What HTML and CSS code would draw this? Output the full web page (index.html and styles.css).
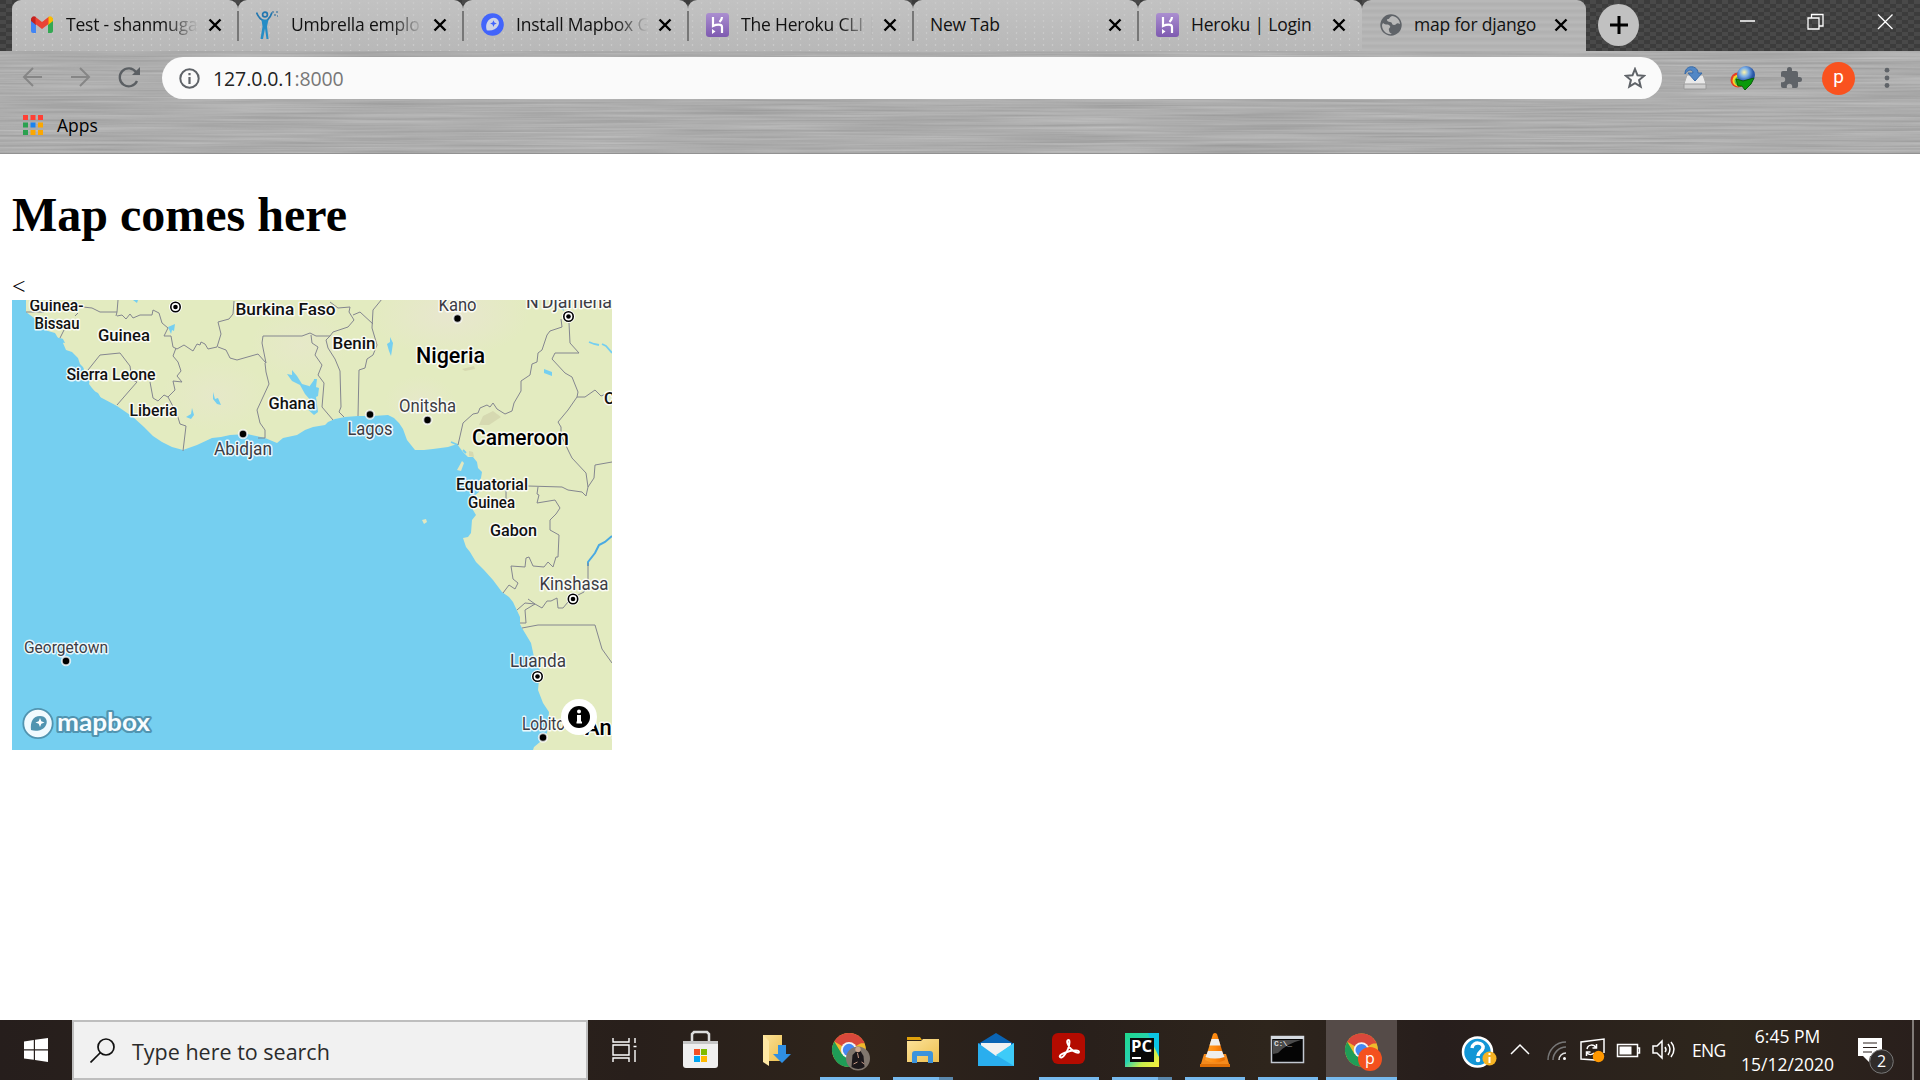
FILE: index.html
```html
<!DOCTYPE html>
<html lang="en">
<head>
<meta charset="utf-8">
<title>map for django</title>
<link rel="stylesheet" href="styles.css">
</head>
<body>
<svg class="defs" width="0" height="0">
  <defs>
    <linearGradient id="heroku" x2="0" y2="1"><stop stop-color="#ab8fd0"/><stop offset="1" stop-color="#7e5ab0"/></linearGradient>
    <linearGradient id="folder" x2="1" y2="1"><stop stop-color="#fce29a"/><stop offset="1" stop-color="#edc04f"/></linearGradient>
    <linearGradient id="cone" x2="1"><stop stop-color="#ffa12b"/><stop offset=".5" stop-color="#ff8a10"/><stop offset="1" stop-color="#e56a00"/></linearGradient>
    <linearGradient id="pycharm" x2="1" y2="1"><stop stop-color="#1fd98c"/><stop offset=".45" stop-color="#27d2b1"/><stop offset=".7" stop-color="#c8ee4b"/><stop offset="1" stop-color="#fcf03c"/></linearGradient>
    <radialGradient id="globe" cx=".4" cy=".35"><stop stop-color="#fff5a8"/><stop offset=".5" stop-color="#79aee8"/><stop offset="1" stop-color="#2a56a6"/></radialGradient>
    <symbol id="close" viewBox="0 0 14 14"><path d="M1.500 1.500l11 11M12.500 1.500l-11 11" fill="none" stroke="#000" stroke-width="2.400"/></symbol>
    <symbol id="heroku-icon" viewBox="0 0 23 24"><rect width="23" height="24" rx="3" fill="url(#heroku)"/><path d="M7 4v9c3-1.500 9-2.500 9 1v6M16 4c0 2-1 3.500-2.500 5" fill="none" stroke="#fff" stroke-width="2.200"/><path d="M6 16l3.500 2.500L6 21z" fill="#fff"/></symbol>
    <symbol id="chrome" viewBox="-17 -17 34 34"><circle r="16.500" fill="#efb92c"/><path d="M0 0L-14.300-8.200A16.500 16.500 0 0 1 14.300-8.200z" fill="#d9483b"/><path d="M-14.300-8.200A16.500 16.500 0 0 0 1 16.500L7 4-7 4z" fill="#1f9d57"/><path d="M0-7.500H14.700" stroke="#d9483b" stroke-width="2"/><circle r="7.800" fill="#f4f4f4"/><circle r="6" fill="#4587f1"/></symbol>
  </defs>
</svg>
<header class="browser">
  <svg class="brush" width="1920" height="154"><filter id="metal" x="0" y="0" width="100%" height="100%" color-interpolation-filters="sRGB"><feTurbulence type="fractalNoise" baseFrequency=".006 .4" numOctaves="3" seed="4"/><feColorMatrix values=".17 0 0 0 .593 .17 0 0 0 .593 .17 0 0 0 .593 0 0 0 0 1"/></filter><rect width="1920" height="154" filter="url(#metal)"/></svg>
  <div class="tabstrip">
    <div class="tabs">
      <div class="tab"><svg width="22" height="17" viewBox="0 0 22 17"><path d="M0 2v13q0 2 2 2h3V6z" fill="#4285f4"/><path d="M22 2v13q0 2-2 2h-3V6z" fill="#34a853"/><path d="M0 2.500Q2-1 5 1v8L0 5z" fill="#c5221f"/><path d="M22 2.500Q20-1 17 1v8l5-4z" fill="#fbbc04"/><path d="M4.500 1L11 6l6.500-5v7L11 13 4.500 8z" fill="#ea4335"/></svg><span class="title">Test - shanmuga</span><svg class="x"><use href="#close"/></svg></div>
      <div class="tab"><svg width="23" height="28" viewBox="0 0 23 28"><g fill="none" stroke="#2277b0" stroke-width="1.700"><path d="M.5 1.500c2 5 4 7 7 8M16 1.500c-1 4-3 6-5 8"/><circle cx="9" cy="3.500" r="2.400"/></g><path d="M5.500 8.500h7l-1.500 7 1.500 12.500h-2L9 17.500 7 28H4.500l2-12.500z" fill="#258dc6"/><path d="M16 1h2M20 1h2M18 4h2M21 5h1" stroke="#5584a6" stroke-width="1.500"/></svg><span class="title">Umbrella emplo</span><svg class="x"><use href="#close"/></svg></div>
      <div class="tab"><svg width="23" height="23" viewBox="0 0 24 24"><circle cx="12" cy="12" r="11.800" fill="#4264fb"/><path d="M6 18c-2-6 1-12 7-13 5 0 7 5 5 8-2 4-7 6-12 5z" fill="#cfd4e6"/><path d="M13 7.500l1 2.500 2.500 1-2.500 1-1 2.500-1-2.500L9.500 11l2.500-1z" fill="#4264fb"/></svg><span class="title">Install Mapbox G</span><svg class="x"><use href="#close"/></svg></div>
      <div class="tab"><svg width="23" height="24"><use href="#heroku-icon"/></svg><span class="title">The Heroku CLI |</span><svg class="x"><use href="#close"/></svg></div>
      <div class="tab plain"><span class="title full">New Tab</span><svg class="x"><use href="#close"/></svg></div>
      <div class="tab last"><svg width="23" height="24"><use href="#heroku-icon"/></svg><span class="title full">Heroku | Login</span><svg class="x"><use href="#close"/></svg></div>
      <div class="tab active"><svg width="22" height="22" viewBox="0 0 22 22"><circle cx="11" cy="11" r="10.700" fill="#5f6368"/><path d="M3 9c3 3 5 0 7 3 1 2-2 2-1 4 0 2 1 3 3 4-5 1-10-3-10-9zM12 2c-3 1-2 3-4 3s-1 3 2 3 1 3 4 3 2-3 6-1c0-4-4-8-8-8z" fill="#b9b9b9"/></svg><span class="title full">map for django</span><svg class="x"><use href="#close"/></svg></div>
    </div>
    <div class="strip-end">
      <div class="newtab"><svg width="18" height="18" viewBox="0 0 18 18"><path d="M9 0v18M0 9h18" stroke="#000" stroke-width="3"/></svg></div>
      <svg class="winbtns" width="154" height="18" viewBox="0 0 154 18" fill="none" stroke="#fff" stroke-width="1.300"><path d="M0 8h15M68 5h11v11H68zM71.500 5V1.500H83V13h-4M138 1.500l14.500 14.500M152.500 1.500L138 16"/></svg>
    </div>
  </div>
  <div class="toolbar">
    <svg class="nav" width="120" height="24" viewBox="0 0 120 24" fill="none" stroke-width="2"><path d="M20 11H2M11 2l-9 9 9 9M49 11h18M58 2l9 9-9 9" stroke="#868686"/><path d="M114 6a9 9 0 1 0 1 9" stroke="#5b5f63" stroke-width="2.300"/><path d="M118 1v8h-8z" fill="#5b5f63"/></svg>
    <div class="omnibox">
      <svg width="21" height="21" viewBox="0 0 21 21"><circle cx="10.500" cy="10.500" r="9.200" fill="none" stroke="#5f6368" stroke-width="2"/><path d="M10.500 9v7M10.500 5v2.200" stroke="#5f6368" stroke-width="2.200"/></svg>
      <span class="url">127.0.0.1<i>:8000</i></span>
      <svg width="22" height="22" viewBox="0 0 22 22"><path d="M11 2l2.500 6.300 6.700.5-5.100 4.300 1.600 6.600L11 16.100l-5.700 3.600 1.600-6.600L1.800 8.800l6.700-.5z" fill="none" stroke="#5f6368" stroke-width="2"/></svg>
    </div>
    <div class="actions">
      <svg width="24" height="24" viewBox="0 0 24 24"><path d="M4 9h16l3 9v5H1v-5z" fill="#e9e9e9" stroke="#aaa"/><path d="M1 18h22v5H1z" fill="#cfcfcf" stroke="#999"/><path d="M2 8C2-2 15-1 15 7h4l-7 8-7-8h5c0-4-5-4-8 1z" fill="#5187c6" stroke="#376aa8"/></svg>
      <svg width="26" height="26" viewBox="0 0 26 26"><circle cx="8" cy="15" r="7.500" fill="#e43e24"/><circle cx="8.500" cy="15.500" r="6" fill="#f5d327"/><circle cx="9" cy="16" r="4.500" fill="#53c34a"/><circle cx="16" cy="10" r="9" fill="url(#globe)"/><path d="M6 14l7 2 11-3-3 6-6 6-3-4-4 0z" fill="#0a9a0a" stroke="#0a5f0a"/></svg>
      <svg width="24" height="24" viewBox="0 0 24 24"><path d="M20.500 11H19V7a2 2 0 0 0-2-2h-4V3.500a2.500 2.500 0 0 0-5 0V5H4a2 2 0 0 0-2 2v3.800h1.500a2.700 2.700 0 0 1 0 5.400H2V20a2 2 0 0 0 2 2h3.800v-1.500a2.700 2.700 0 0 1 5.400 0V22H17a2 2 0 0 0 2-2v-4h1.500a2.500 2.500 0 0 0 0-5z" fill="#5f6368"/></svg>
      <span class="avatar">p</span>
      <svg class="menu" width="6" height="22" viewBox="0 0 6 22" fill="#5f6368"><circle cx="3" cy="3.200" r="2.400"/><circle cx="3" cy="11" r="2.400"/><circle cx="3" cy="18.500" r="2.400"/></svg>
    </div>
  </div>
  <div class="bookmarks">
    <svg width="20" height="20" viewBox="0 0 20 20"><path d="M0 0h5v5H0zM7.500 0h5v5h-5zM15 0h5v5h-5z" fill="#ff3f35"/><path d="M0 7.500h5v5H0zM0 15h5v5H0z" fill="#2ba14f"/><path d="M7.500 7.500h5v5h-5z" fill="#1a83f0"/><path d="M15 7.500h5v5h-5zM7.500 15h5v5h-5zM15 15h5v5h-5z" fill="#fba700"/></svg>
    <span>Apps</span>
  </div>
</header>
<main class="page">
  <h1>Map comes here</h1>
  &lt;
  <svg class="map" width="600" height="450" viewBox="12 300 600 450">
    <defs>
      <radialGradient id="dry"><stop stop-color="#ebe3d8" stop-opacity=".6"/><stop offset="1" stop-color="#ebe3d8" stop-opacity="0"/></radialGradient>
      <clipPath id="view"><rect x="12" y="300" width="600" height="450"/></clipPath>
    </defs>
    <rect x="12" y="300" width="600" height="450" fill="#75cff0"/>
    <path fill="#e3ebc0" d="M26 300V312L34 318 43 327 48 331 55 333 58 338 63 339V343L66 350 72 352 78 358 80 364 83 367 86 374 90 378 89 384 92 388 100 397 117 406 133 417 144 427 153 436 162 442 172 447 183 450 197 445 212 438 221 437 230 435 247 434 265 438 277 443 283 438 297 435 305 430 313 427 325 425 328 422 335 419 345 417 358 416 373 416 388 415 394 418 399 423 403 429 407 440 415 450 424 450 433 449 448 447 457 444 463 452 468 457 473 457 477 462 478 468 482 472 481 478 478 484 479 492 474 496 473 510 476 515 472 520 471 533 468 537 463 538 466 547 470 552 476 562 484 570 493 580 502 592 509 597 513 602 520 617 520 624 522 628 531 643 534 657 540 670 538 690 543 703 549 712 547 733 540 742 534 747 533 750H612V300z"/>
    <g clip-path="url(#view)" fill="url(#dry)"><ellipse cx="450" cy="315" rx="80" ry="42"/><ellipse cx="215" cy="395" rx="55" ry="36" opacity=".6"/><ellipse cx="300" cy="345" rx="50" ry="35" opacity=".6"/><ellipse cx="420" cy="400" rx="35" ry="25" opacity=".6"/></g>
    <path d="M483 416l10-5 8 6-12 8-10 0zM462 369l12-3 1 3-10 2zM469 451l4 1 1 5-5-1z" fill="#c9c8a2" opacity=".5"/>
    <path d="M457 470l5-9 2 2-3 8zM422 520l4-1 1 3-3 2z" fill="#e3e8bf"/>
    <g fill="#75cff0"><path d="M287 374l5 1v-5l5 6 5 8 7 2 4 7 1-14 3 0-1 8 3 1-1 8-2 1 2 15-4 3-9-8-1-6 8 1-7-8-5-9-8-4zM213 392l2 7 3-1 3 7-4-1-4-5zM192 408l2 7-3 4-5-2 5-3zM168 327l7-3-1 7-2-1-1 4zM390 337l3 6-1 7-1 6-2-5-2-7 3-2zM544 369l8 3 0 4-8-3zM133 300h5l-1 3zM53 319l4 1-1 4zM309 387l5-7 2 2v10l-7 5zM560 301h4v10l-3-2zM88 388l10 5 3 5-8-2zM55 337l8 2 2 4-7-1z"/></g>
    <path d="M589 342l5 2 5 1M602 344l4 2 6 7M466 453l-3-3M451 442l7 3" fill="none" stroke="#75cff0" stroke-width="1.800"/>
    <path d="M588 566v-4l7-9 4-8 6-3 7-6" fill="none" stroke="#49a9e2" stroke-width="2"/>
    <path fill="none" stroke="#84868f" stroke-width="1" d="M26 312H44M83 307l9 1 8 4h17l1-12M60 338l4-8M75 316l3-3M116 316l1-4M117 316l5-1 4 4 4-5 3 4 7-3 12 0 1-5 6 3 3 10 6 5-4 8 7 0 2 11 4 2 7-4 9 6 4-7 3 1 1-3 4 2 3 5 9-2 4-13-3-12 11-3 4-5 1-13M218 347l8 3 4 8 7 2 21-6 8 9-4-20 1-7h39l8-3 6 3 14 0 3-4 15-5 6-7-5-8 1-5-12 1-8-6M265 363l1 9 3 12-12 26 3 13 5 7v8h-7M311 335l1 8 6 4-3 8 7 10-4 10 6 8-2 24 11 13M330 336l-4 4 2 8 7 11 5 12 1 36-2 5 5 5M358 416l1-46 6-2 2-9 6-4 4-10-5-17 1-18 9-11M353 315l7-3 13 12M458 445l5-22 10-9 5-1 2-5 7-3 3 2 3-4 4 6 8 5 7-3 2-8 7-12 0-10 9-6 2-11 5-2 1-9 4-3 5-15 3-4 12-4-1-8M569 323l1 20 9 10h-24l-3 6 13 14 7 4 6 15-1 5 8 0 10-7 6 6 5-2M577 397l-9 13-10 12 3 5 0 8 8 17 3 6 14 15 2 14 6-9 1-13 17-3M528 486l34 1 6 3 14 2 4 4 2-9M538 487l-1 7 2 1-2 8 18-3 5 8-4 6-6 6v10l9 5-1 22-2 0-3 10-5-5-4 5-11-1-4-9-3 1-1 9-14-1 2 13 5 4-3 6-6-4-6 8M506 490v9M517 610l8-7 10 1 7 4 5-7h4l6-3 1 10h5l5-6M576 596l8-4 4-11v-18M535 604l-10 6 1 13h-6M528 599l7 5M522 628l16-3h57l7 24 10 14M88 370l12-15 20-2 10 13 2 14 5 2-7 8-13 15M150 382l3 16 5 3 6-6 4 2 9 17 3 10 6 2-3 25M168 397l7-7-2-9 9 1-5-6 4-5-3-9-5-6 3-8"/>
    <g class="country" clip-path="url(#view)">
      <text x="29.500" y="310.500" textLength="54" lengthAdjust="spacingAndGlyphs">Guinea-</text><text x="34.500" y="328.500" textLength="45" lengthAdjust="spacingAndGlyphs">Bissau</text><text x="98" y="341" textLength="52" lengthAdjust="spacingAndGlyphs">Guinea</text><text x="66.500" y="379.500" textLength="89" lengthAdjust="spacingAndGlyphs">Sierra Leone</text><text x="129.500" y="416" textLength="48" lengthAdjust="spacingAndGlyphs">Liberia</text><text x="235.500" y="315" textLength="100" lengthAdjust="spacingAndGlyphs">Burkina Faso</text><text x="268.500" y="408.500" textLength="47" lengthAdjust="spacingAndGlyphs">Ghana</text><text x="332.500" y="349" textLength="43" lengthAdjust="spacingAndGlyphs">Benin</text><text x="456" y="489.500" textLength="72" lengthAdjust="spacingAndGlyphs">Equatorial</text><text x="468" y="507.500" textLength="47" lengthAdjust="spacingAndGlyphs">Guinea</text><text x="490" y="536" textLength="47" lengthAdjust="spacingAndGlyphs">Gabon</text><text x="604" y="404">C</text>
      <g class="large"><text x="416" y="362.500" textLength="69" lengthAdjust="spacingAndGlyphs">Nigeria</text><text x="472" y="444.500" textLength="97" lengthAdjust="spacingAndGlyphs">Cameroon</text><text x="585" y="735">Ang</text></g>
    </g>
    <g class="city" clip-path="url(#view)">
      <text x="214" y="454.500" textLength="58" lengthAdjust="spacingAndGlyphs">Abidjan</text><text x="438.500" y="310.500" textLength="38" lengthAdjust="spacingAndGlyphs">Kano</text><text x="526" y="307.500" textLength="86" lengthAdjust="spacingAndGlyphs">N'Djamena</text><text x="399" y="411.500" textLength="57" lengthAdjust="spacingAndGlyphs">Onitsha</text><text x="347.500" y="434.500" textLength="45" lengthAdjust="spacingAndGlyphs">Lagos</text><text x="539.500" y="589.500" textLength="69" lengthAdjust="spacingAndGlyphs">Kinshasa</text><text x="510" y="667" textLength="56" lengthAdjust="spacingAndGlyphs">Luanda</text><text x="522" y="730" textLength="43" lengthAdjust="spacingAndGlyphs">Lobito</text><text class="small" x="24" y="653" textLength="84" lengthAdjust="spacingAndGlyphs">Georgetown</text>
    </g>
    <g stroke="#fff" stroke-opacity=".75" stroke-width="2"><circle cx="243" cy="434" r="4.200"/><circle cx="457.500" cy="318.500" r="4.200"/><circle cx="370" cy="414.500" r="4.200"/><circle cx="427.500" cy="420" r="4.200"/><circle cx="543" cy="737.500" r="4.200"/><circle cx="66" cy="661" r="4.200"/></g>
    <g fill="#fff"><circle cx="175.500" cy="307" r="6.500"/><circle cx="568.500" cy="316.500" r="6.500"/><circle cx="573" cy="599" r="6.500"/><circle cx="537.500" cy="676.500" r="6.500"/></g>
    <g fill="none" stroke="#000" stroke-width="1.600"><circle cx="175.500" cy="307" r="4.700"/><circle cx="568.500" cy="316.500" r="4.700"/><circle cx="573" cy="599" r="4.700"/><circle cx="537.500" cy="676.500" r="4.700"/></g>
    <circle cx="175.500" cy="307" r="2.300"/><circle cx="568.500" cy="316.500" r="2.300"/><circle cx="573" cy="599" r="2.300"/><circle cx="537.500" cy="676.500" r="2.300"/>
    <circle cx="579" cy="717" r="18" fill="#fff"/><circle cx="579" cy="717" r="11"/><circle cx="579" cy="711.500" r="2" fill="#fff"/><path d="M577 715h4v6.500h1v2h-5.500v-2h.5z" fill="#fff"/>
    <circle cx="38" cy="723.500" r="14.700" fill="#f1fafe" stroke="#5194b0" stroke-width="1.800"/><path d="M31 730c-1-8 2-14 9-14 6 0 8 5 6 9-2 5-9 7-15 5z" fill="#5194b0"/><path d="M40 718l1.300 3.200 3.200 1.300-3.200 1.300L40 727l-1.300-3.200-3.200-1.300 3.200-1.300z" fill="#fff"/>
    <text class="brand" x="57" y="731" textLength="93" lengthAdjust="spacingAndGlyphs">mapbox</text>
  </svg>
</main>
<footer class="taskbar">
  <div class="start"><svg width="24" height="24" viewBox="0 0 24 24" fill="#fff"><path d="M0 3.400l9.800-1.400v9.300H0zM11 1.800L24 0v11.300H11zM0 12.500h9.800v9.300L0 20.500zM11 12.500h13V24l-13-1.900z"/></svg></div>
  <div class="search"><svg width="25" height="25" viewBox="0 0 25 25" fill="none" stroke="#111" stroke-width="1.700"><circle cx="16" cy="9" r="8"/><path d="M10.500 14.500L.5 24.500"/></svg><span>Type here to search</span></div>
  <div class="taskview"><svg width="25" height="24" viewBox="0 0 25 24" fill="none" stroke="#fff" stroke-width="1.400"><path d="M1 0v4h16V0M1 24v-4h16v4M1 7h16v10H1zM23 0v5M23 12v12M21.500 8.500h3"/></svg></div>
  <div class="apps">
    <div class="app"><svg viewBox="664 1020 73 60"><path d="M692 1043v-9l2-2h13l2 2v9" fill="none" stroke="#ddd" stroke-width="2.500"/><path d="M683 1041h35v24q0 3-3 3h-29q-3 0-3-3z" fill="#efefef"/><path d="M683 1041h35v3h-35z" fill="#c5c5c5"/><path d="M694 1049h6v6h-6z" fill="#f25022"/><path d="M701 1049h6v6h-6z" fill="#7fba00"/><path d="M694 1056h6v6h-6z" fill="#00a4ef"/><path d="M701 1056h6v6h-6z" fill="#ffb900"/></svg></div>
    <div class="app"><svg viewBox="737 1020 73 60"><path d="M763 1035h19v26h-19z" fill="url(#folder)"/><path d="M763 1035l6 6v25l-6-4z" fill="#ffe8a4"/><path d="M778 1045h8v9h5l-9 9-9-9h5z" fill="#2f8fe3"/></svg></div>
    <div class="app run"><svg viewBox="810.500 1020 73 60"><use href="#chrome" x="832" y="1032.500" width="35" height="35"/><circle cx="858.500" cy="1058.500" r="12" fill="#81776e"/><path d="M852 1067l1-12 4-4h4l3 5 1 11q-6 4-13 0z" fill="#1c181b"/><circle cx="858.500" cy="1049.500" r="2.700" fill="#c9a690"/><path d="M858 1053l1 5M854 1064l4-2M862 1062l3 2" stroke="#c79a86" fill="none"/></svg></div>
    <div class="app run multi"><svg viewBox="883 1020 73 60"><path d="M907 1037h13l2 3h-15z" fill="#e0a10c"/><path d="M907 1041h14l2-2h16v23h-32z" fill="url(#folder)"/><path d="M912 1063v-9q0-3 3-3h15q3 0 3 3v9h-5v-7h-11v7z" fill="#3b93dc"/></svg></div>
    <div class="app"><svg viewBox="956 1020 73 60"><path d="M978 1044l18-11 18 11v8h-36z" fill="#0a64b4"/><path d="M981 1043h30v16h-30z" fill="#f1f1f1"/><path d="M978 1043l18 13 18-13v23h-36z" fill="#2aaeee"/><path d="M1014 1043v23l-18-11z" fill="#3ecbf8"/></svg></div>
    <div class="app run"><svg viewBox="1029 1020 73 60"><rect x="1052" y="1033" width="33" height="31" rx="6" fill="#b30b00"/><path d="M1060 1057c-2-2 6-5 10-6s9-1 9 1-5 0-8-3-5-8-3-9 2 4 0 9-6 10-8 8z" fill="none" stroke="#fff" stroke-width="1.900"/></svg></div>
    <div class="app run multi"><svg viewBox="1102 1020 73 60"><path d="M1125 1033h34v34h-34z" fill="url(#pycharm)"/><path d="M1148 1033h11v24l-9-19z" fill="#0bc4e4"/><path d="M1130 1038h24v24h-24z" fill="#090909"/><text class="pc" x="1131" y="1052" textLength="21" lengthAdjust="spacingAndGlyphs">PC</text><path d="M1132 1058h9" stroke="#fff" stroke-width="2"/></svg></div>
    <div class="app run"><svg viewBox="1175 1020 73 60"><path d="M1204 1054h22l4 13h-30z" fill="#f58a1c"/><path d="M1213 1034q2-2 4 0l8 26q-10 5-20 0z" fill="url(#cone)"/><path d="M1211.500 1039h7l2 6.500h-11zM1208 1051h14l2.500 6q-9.500 3-19 0z" fill="#eee"/><path d="M1200 1067v-3h30v3z" fill="#df6f06"/></svg></div>
    <div class="app run"><svg viewBox="1248 1020 73 60"><rect x="1271.500" y="1036.500" width="32" height="26" fill="#050505" stroke="#c2c8d0" stroke-width="1.500"/><path d="M1271 1036h33v3h-33z" fill="#d5dae0"/><path d="M1273 1040h28q-15 4-23 13l-5 1z" fill="#4b4b4b"/><text class="cmd" x="1274" y="1046" textLength="18">C:\_</text></svg></div>
    <div class="app run current"><svg viewBox="1326 1020 73 60"><use href="#chrome" x="1344.500" y="1033" width="34" height="34"/><circle cx="1370" cy="1059" r="12" fill="#f4511e"/><text class="badge" x="1370" y="1064">p</text></svg></div>
  </div>
  <div class="tray">
    <svg class="tray-icons" width="220" height="60" viewBox="1460 1020 220 60" fill="none" stroke="#fff" stroke-width="1.500"><circle cx="1477.500" cy="1052" r="14.500" fill="#1296d6" stroke-width="2.500"/><path d="M1472 1048c1-7 12-6 11 0-1 4-5 4-5 8" stroke-width="3.500"/><circle cx="1478" cy="1060" r="1.300" stroke-width="2"/><circle cx="1489.500" cy="1058.500" r="7" fill="#f5b324" stroke="none"/><path d="M1489.500 1057v6M1489.500 1053v2" stroke-width="2"/><path d="M1511 1054l9-9 9 9"/><g stroke="#777"><path d="M1548 1060c0-10 8-18 18-18M1553 1060c0-7 6-13 13-13"/><path d="M1559 1060c0-4 3-7 7-7" stroke="#ddd"/></g><circle cx="1564.500" cy="1058.500" r="1.500" fill="#fff" stroke="none"/><path d="M1595 1060l-14-1v-17l23-3v14M1587 1049c1-5 7-5 9-1M1596.500 1044v4h-4M1594 1053c-2 2-5 2-7 0M1586.500 1056v-4h4"/><circle cx="1598.500" cy="1056.500" r="5.700" fill="#ff9800" stroke="none"/><path d="M1617.500 1044.500h20v12h-20zM1637.500 1048h2v5h-2"/><path d="M1619.500 1046.500h12v8h-12z" fill="#fff" stroke="none"/><path d="M1653 1046h4l5-5v17l-5-5h-4zM1665 1047q2 3 0 5M1668 1044q4 5 0 11M1671 1042q6 7 0 15"/></svg>
    <span class="lang">ENG</span>
    <div class="clock"><span>6:45 PM</span><span>15/12/2020</span></div>
    <svg class="notice" width="40" height="60" viewBox="1856 1020 40 60"><path d="M1858 1038h24v18h-12l-1 6-6-6h-5z" fill="#fff"/><path d="M1863 1043h14M1863 1047.500h14M1863 1052h9" stroke="#2b211d"/><circle cx="1881.500" cy="1061.500" r="11.800" fill="#302c2a" stroke="#777"/><text class="badge" x="1881.500" y="1067">2</text></svg>
    <div class="peek"></div>
  </div>
</footer>
</body>
</html>
```
FILE: styles.css
```css
* { box-sizing: border-box; }
html, body { height: 100%; }
body {
  margin: 0;
  display: flex;
  flex-direction: column;
  overflow: hidden;
  background: #fff;
  font-family: "Open Sans", sans-serif;
}
svg { flex: none; display: block; }
.defs { position: absolute; }

.browser {
  position: relative;
  height: 154px;
  flex: none;
  border-bottom: 1px solid #929292;
}
.brush { position: absolute; left: 0; top: 0; z-index: -1; }
.tabstrip {
  height: 51px;
  display: flex;
  padding-left: 12px;
  background: repeating-conic-gradient(#494949 0 25%, #3c3c3c 0 50%) 0 0 / 12px 8px;
}
.tabs { display: flex; }
.tab {
  position: relative;
  width: 225px;
  height: 51px;
  display: flex;
  align-items: center;
  padding: 0 16px 2px 18px;
  border-radius: 9px 9px 0 0;
  background: radial-gradient(circle, #c9c9c9 0 .6px, transparent 1.200px) 0 0 / 9px 6px, linear-gradient(#c2c2c2, #b8b8b8);
  font-size: 17.500px;
  color: #111;
}
.tab::after {
  content: "";
  position: absolute;
  z-index: 1;
  right: -1px;
  top: 11px;
  width: 2px;
  height: 30px;
  background: #777;
}
.tab:first-child { width: 226px; padding-left: 19px; }
.tab.last::after, .tab.active::after { display: none; }
.tab.last { width: 224px; }
.tab.active { width: 224px; padding-right: 18px; background: repeating-linear-gradient(#b8b8b8 0 2px, #b1b1b1 3px 5px, #b5b5b5 6px 7px); }
.tab > svg:first-child { margin-right: 12px; min-width: 22px; }
.tab:first-child > svg:first-child { margin-right: 13px; }
.tab.plain { padding-left: 17px; }
.title {
  width: 132px;
  padding-bottom: 1px;
  white-space: nowrap;
  overflow: hidden;
  letter-spacing: -.2px;
  -webkit-mask-image: linear-gradient(90deg, #000 75%, transparent);
  mask-image: linear-gradient(90deg, #000 75%, transparent);
}
.title.full { -webkit-mask-image: none; mask-image: none; }
.x { width: 14px; height: 14px; margin-left: auto; }
.strip-end {
  flex: 1;
  display: flex;
  justify-content: space-between;
  padding: 4px 26px 0 12px;
}
.newtab {
  width: 41px;
  height: 42px;
  border-radius: 50%;
  background: #c1c1c1;
  display: grid;
  place-items: center;
}
.winbtns { margin-top: 9px; }

.toolbar {
  height: 54px;
  display: flex;
  align-items: center;
  padding-left: 22px;
}
.nav { margin-right: 20px; }
.omnibox {
  width: 1500px;
  height: 42px;
  display: flex;
  align-items: center;
  padding: 0 16px 0 17px;
  border-radius: 21px;
  background: #fafafa;
}
.url { flex: 1; margin-left: 13px; font-size: 19.500px; letter-spacing: -.1px; color: #222; }
.url i { font-style: normal; color: #777; }
.actions { display: flex; align-items: center; margin-left: 21px; gap: 23px; }
.avatar {
  width: 33px;
  height: 33px;
  margin-left: -4px;
  border-radius: 50%;
  background: #f9521f;
  color: #fff;
  text-align: center;
  font: 19px/29px Roboto, sans-serif;
}
.menu { margin-left: 6px; }
.bookmarks {
  height: 42px;
  display: flex;
  align-items: center;
  gap: 14px;
  padding: 0 0 2px 23px;
  font-size: 17.500px;
}

.page {
  flex: 1;
  padding: 0 12px;
  font: 24px/27px "Liberation Serif", serif;
}
.page h1 { margin: 33px 0 30px; font-size: 48px; line-height: 56px; }
.country { font: 500 16.500px Roboto, sans-serif; fill: #111; }
.country .large { font-size: 22px; fill: #000; }
.city { font: 18px Roboto, sans-serif; fill: #3c3c44; }
.city .small { font-size: 16.500px; }
.country text, .city text { paint-order: stroke; stroke: #fff; stroke-opacity: .85; stroke-width: 3px; stroke-linejoin: round; }
.brand { font: 700 24px Lato, sans-serif; fill: #f7fcff; stroke: #5194b0; stroke-width: 4px; paint-order: stroke; stroke-linejoin: round; }

.taskbar {
  height: 60px;
  flex: none;
  display: flex;
  background: linear-gradient(90deg, #261e1c, #2d241c 20%, #281f1b 33%, #2e241b 45%, #281f1b 55%, #2e251c 66%, #271e1c 75%, #2e261c 90%, #291f1c);
  color: #fff;
}
.start { width: 72px; display: grid; place-items: center; }
.search {
  width: 516px;
  display: flex;
  align-items: center;
  gap: 17px;
  padding-left: 16px;
  border: 2px solid #bebebe;
  background: #f1f1f1;
  color: #2b2b2b;
  font-size: 21.500px;
}
.search span { padding-top: 2px; }
.taskview { width: 76px; display: grid; place-items: center; padding-right: 4px; }
.apps { display: flex; }
.app { position: relative; width: 73px; height: 60px; }
.app svg { width: 73px; height: 60px; }
.run::after {
  content: "";
  position: absolute;
  left: 10px;
  bottom: 0;
  width: 60px;
  height: 3px;
  background: #76b9ed;
}
.multi::after { background: linear-gradient(90deg, #76b9ed 46px, #5a87ab 46px); }
.current { width: 71px; background: #554b48; overflow: hidden; }
.current::after { left: 0; width: 71px; }
.apps .current { margin-left: 5px; }
.pc { font: 700 16px "Open Sans", sans-serif; fill: #fff; }
.cmd { font: 700 8px "Liberation Mono", monospace; fill: #ddd; }
.badge { font: 16px "Open Sans", sans-serif; fill: #fff; text-anchor: middle; }
.tray { flex: 1; display: flex; align-items: center; padding-left: 63px; }
.lang { width: 47px; padding-left: 12px; font-size: 17.500px; letter-spacing: -.7px; }
.clock {
  width: 121px;
  display: flex;
  flex-direction: column;
  align-items: center;
  font-size: 17.500px;
  line-height: 28px;
}
.notice { margin-left: 8px; }
.peek { margin-left: auto; width: 8px; height: 60px; border-left: 2px solid #817b77; }
```
